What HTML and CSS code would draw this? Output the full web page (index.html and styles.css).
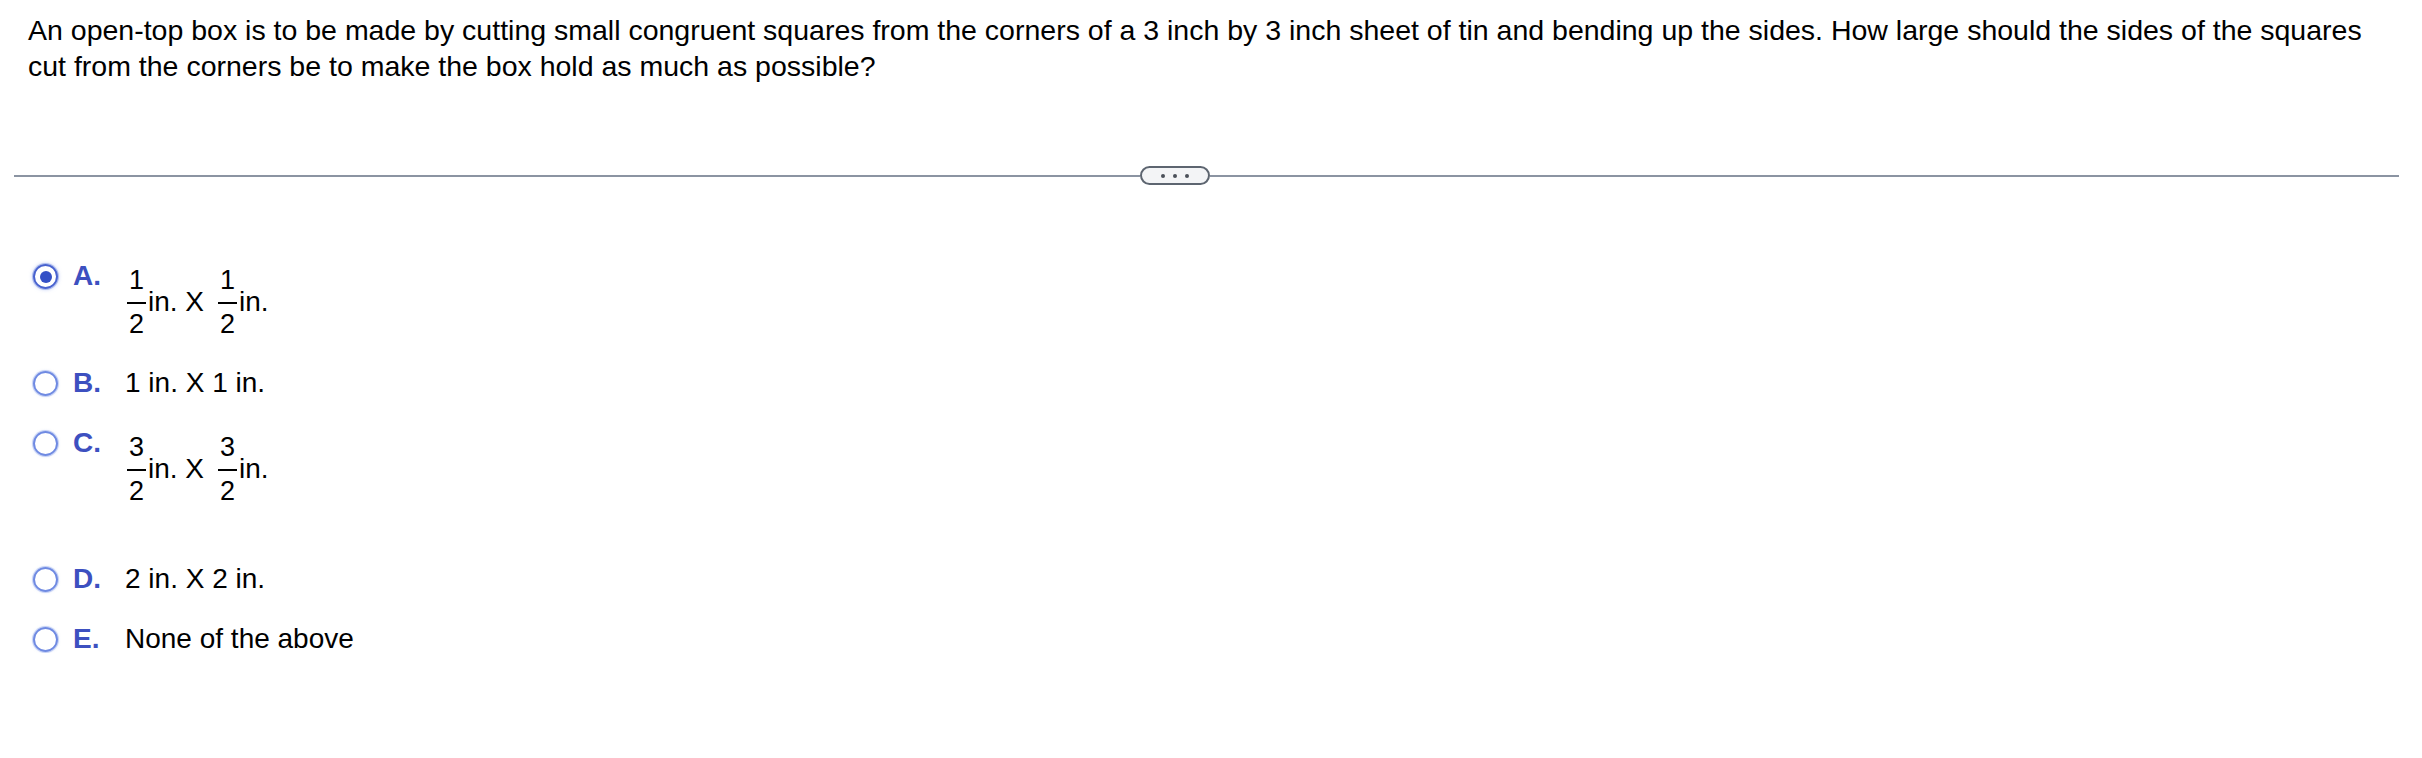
FILE: index.html
```html
<!DOCTYPE html>
<html lang="en">
<head>
<meta charset="utf-8">
<title>Open-top box question</title>
<link rel="stylesheet" href="styles.css">
</head>
<body>
<div class="page">
  <p class="question">An open-top box is to be made by cutting small congruent squares from the corners of a 3 inch by 3 inch sheet of tin and bending up the sides. How large should the sides of the squares cut from the corners be to make the box hold as much as possible?</p>

  <div class="divider">
    <span class="rule"></span>
    <span class="pill"><i class="dot"></i><i class="dot"></i><i class="dot"></i></span>
    <span class="rule"></span>
  </div>

  <ul class="options">
    <li class="option selected">
      <span class="radio"></span>
      <span class="label">A.</span>
      <span class="math">
        <span class="frac"><span class="num">1</span><span class="bar"></span><span class="den">2</span></span>
        <span class="mtext">in. X</span>
        <span class="frac"><span class="num">1</span><span class="bar"></span><span class="den">2</span></span>
        <span class="mtext tight">in.</span>
      </span>
    </li>
    <li class="option">
      <span class="radio"></span>
      <span class="label">B.</span>
      <span class="text">1 in. X 1 in.</span>
    </li>
    <li class="option extra-gap">
      <span class="radio"></span>
      <span class="label">C.</span>
      <span class="math">
        <span class="frac"><span class="num">3</span><span class="bar"></span><span class="den">2</span></span>
        <span class="mtext">in. X</span>
        <span class="frac"><span class="num">3</span><span class="bar"></span><span class="den">2</span></span>
        <span class="mtext tight">in.</span>
      </span>
    </li>
    <li class="option">
      <span class="radio"></span>
      <span class="label">D.</span>
      <span class="text">2 in. X 2 in.</span>
    </li>
    <li class="option">
      <span class="radio"></span>
      <span class="label">E.</span>
      <span class="text">None of the above</span>
    </li>
  </ul>
</div>
</body>
</html>
```

FILE: styles.css
```css
html, body {
  margin: 0;
  padding: 0;
  background: #ffffff;
}

body {
  font-family: "Liberation Sans", Arial, Helvetica, sans-serif;
  color: #000000;
}

.page {
  padding: 12px 23px 0 14px;
}

.question {
  margin: 0;
  padding: 0 0 0 14px;
  font-size: 28.5px;
  line-height: 36px;
}

.divider {
  margin-top: 82px;
  display: grid;
  grid-template-columns: 1126px 70px 1fr;
  align-items: center;
  height: 19px;
}

.rule {
  display: block;
  height: 2px;
  background: #8b94a2;
  margin-top: 1px;
}

.pill {
  box-sizing: border-box;
  height: 19px;
  border: 2px solid #5d6570;
  border-radius: 10px;
  background: #f3f4f6;
  display: flex;
  align-items: center;
  justify-content: center;
  gap: 8px;
}

.dot {
  display: block;
  width: 4px;
  height: 4px;
  border-radius: 50%;
  background: #4b5059;
}

.options {
  list-style: none;
  margin: 77px 0 0 0;
  padding: 0;
  display: flex;
  flex-direction: column;
  gap: 32px;
}

.option {
  display: flex;
  align-items: flex-start;
  font-size: 28px;
  line-height: 28px;
}

.option.extra-gap {
  margin-bottom: 29px;
}

.radio {
  box-sizing: border-box;
  flex: none;
  width: 25px;
  height: 25px;
  margin: 2px 15px 0 19px;
  border-radius: 50%;
  border: 2px solid #6f8ae2;
  box-shadow: 0 0 0 1px rgba(150, 172, 238, 0.45), 0 0 3px rgba(150, 172, 238, 0.5);
  display: flex;
  align-items: center;
  justify-content: center;
}

.option.selected .radio {
  border-color: #4862cf;
  box-shadow: 0 0 0 1px rgba(120, 145, 230, 0.5), 0 0 4px rgba(120, 145, 230, 0.6);
}

.option.selected .radio::after {
  content: "";
  width: 12px;
  height: 12px;
  border-radius: 50%;
  background: #3450c6;
}

.label {
  flex: none;
  width: 52px;
  font-weight: bold;
  color: #3d50c0;
}

.text {
  white-space: nowrap;
}

.math {
  margin-top: 5px;
  display: inline-flex;
  align-items: center;
  white-space: nowrap;
}

.frac {
  display: inline-flex;
  flex-direction: column;
  align-items: center;
  margin: 0 2px 0 2px;
}

.num, .den {
  font-size: 27px;
  line-height: 26px;
}

.num {
  padding-bottom: 9px;
}

.den {
  padding-top: 7px;
}

.bar {
  display: block;
  width: 19px;
  height: 2px;
  background: #000000;
}

.mtext {
  font-size: 28px;
  line-height: 28px;
  margin-right: 12px;
}

.mtext.tight {
  margin-right: 0;
}
```
